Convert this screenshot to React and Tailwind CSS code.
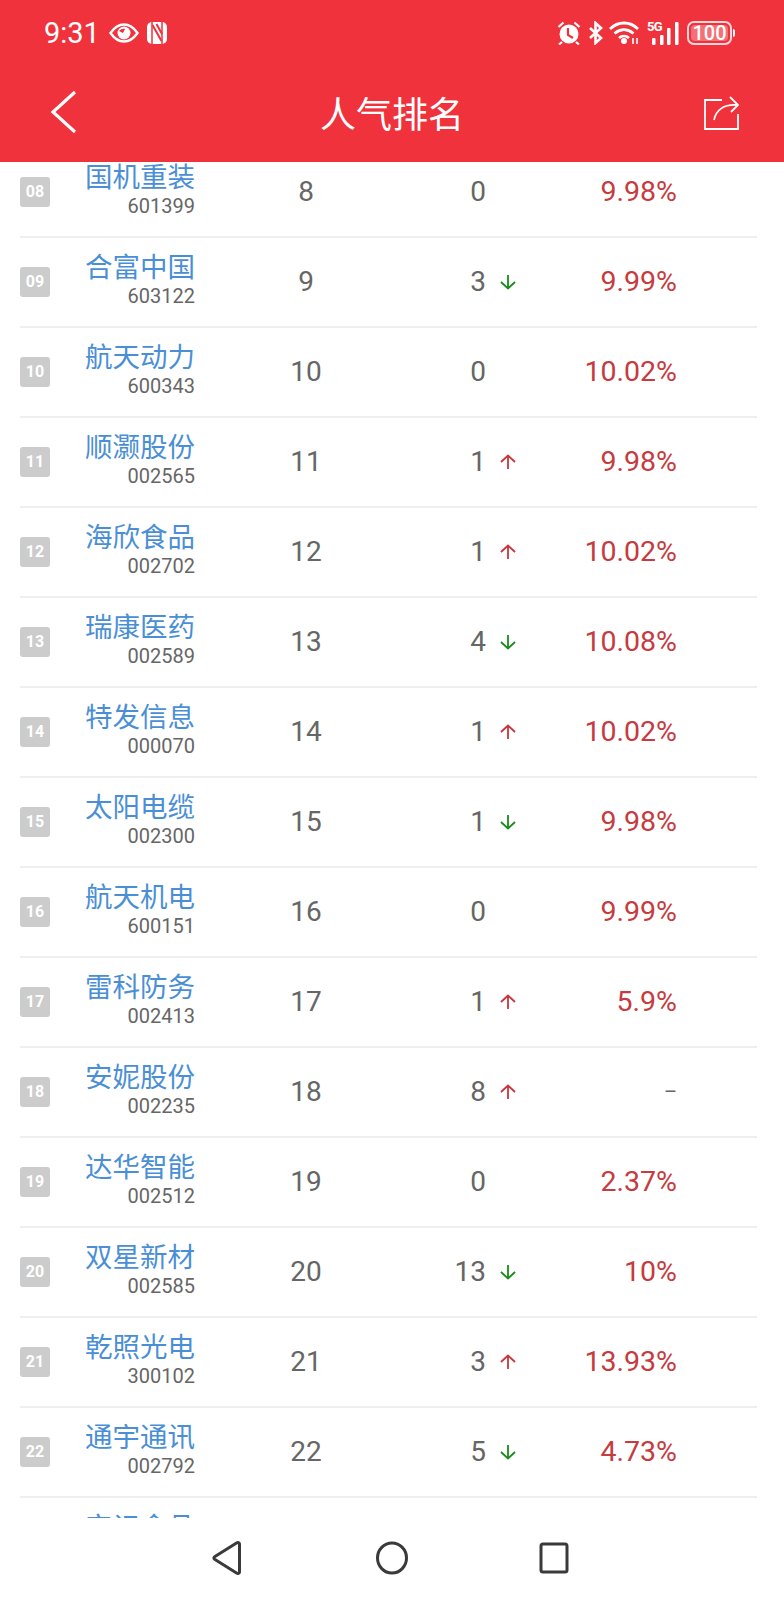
import React from "react";

const rows = [
  ["08", "国机重装", "601399", "8", "0", "", "9.98%"],
  ["09", "合富中国", "603122", "9", "3", "d", "9.99%"],
  ["10", "航天动力", "600343", "10", "0", "", "10.02%"],
  ["11", "顺灏股份", "002565", "11", "1", "u", "9.98%"],
  ["12", "海欣食品", "002702", "12", "1", "u", "10.02%"],
  ["13", "瑞康医药", "002589", "13", "4", "d", "10.08%"],
  ["14", "特发信息", "000070", "14", "1", "u", "10.02%"],
  ["15", "太阳电缆", "002300", "15", "1", "d", "9.98%"],
  ["16", "航天机电", "600151", "16", "0", "", "9.99%"],
  ["17", "雷科防务", "002413", "17", "1", "u", "5.9%"],
  ["18", "安妮股份", "002235", "18", "8", "u", "–"],
  ["19", "达华智能", "002512", "19", "0", "", "2.37%"],
  ["20", "双星新材", "002585", "20", "13", "d", "10%"],
  ["21", "乾照光电", "300102", "21", "3", "u", "13.93%"],
  ["22", "通宇通讯", "002792", "22", "5", "d", "4.73%"],
  ["23", "安记食品", "603696", "23", "0", "", ""],
];

function Arrow({ dir }) {
  if (!dir) return <span className="w-4 h-4" />;
  const up = dir === "u";
  return (
    <svg width="16" height="16" viewBox="0 0 16 16" fill="none" stroke={up ? "#c8363c" : "#1a8a1a"} strokeWidth="1.8">
      {up ? <path d="M8 15V1.5M1 8l7-6.5L15 8" /> : <path d="M8 1v13.5M1 8l7 6.5L15 8" />}
    </svg>
  );
}

function Row({ r }) {
  const dash = r[6] === "–";
  return (
    <div className="h-[90px] border-b-2 border-[#efefef] flex items-center">
      <div className="w-[30px] h-[30px] rounded-[3px] bg-[#cccccc] flex items-center justify-center text-white text-[16px] font-bold">{r[0]}</div>
      <div className="w-[145px] flex flex-col items-end mb-[6px]">
        <div className="text-[27.5px] leading-[34px] text-[#4a8fd6] translate-y-[1px]">{r[1]}</div>
        <div className="text-[20px] leading-[24px] text-[#666666]">{r[2]}</div>
      </div>
      <div className="w-[222px] text-center text-[28px] text-[#666666]">{r[3]}</div>
      <div className="w-[69px] text-right text-[28px] text-[#666666]">{r[4]}</div>
      <div className="w-[30px] flex justify-end"><Arrow dir={r[5]} /></div>
      <div className={dash ? "w-[161px] text-right text-[20px] text-[#666666]" : "w-[161px] text-right text-[28.5px] text-[#c63a40]"}>{r[6]}</div>
    </div>
  );
}

export default function App() {
  return (
    <div className="w-[784px] h-[1600px] bg-white flex flex-col overflow-hidden" style={{ fontFamily: "Roboto, 'Noto Sans CJK SC', sans-serif" }}>
      <header className="h-[162px] bg-[#ef323c] text-white flex flex-col relative z-10 shrink-0">
        <div className="h-[66px] flex items-center justify-between pl-[44px] pr-[49px]">
          <div className="flex items-center">
            <span className="text-[29px] leading-none mt-[1px]">9:31</span>
            <svg className="ml-[9px]" width="30" height="20" viewBox="0 0 30 20">
              <path d="M1.5 10C6 3.5 10 1.5 15 1.5s9 2 13.5 8.5C24 16.5 20 18.5 15 18.5S6 16.5 1.5 10z" fill="none" stroke="#fff" strokeWidth="2.4" />
              <circle cx="15" cy="10" r="6.5" fill="#fff" />
              <path d="M10 8c2-2 4-2.5 6-2l-2 4z" fill="#ef323c" />
            </svg>
            <svg className="ml-[7px]" width="22" height="24" viewBox="0 0 22 24">
              <rect x="1" y="1" width="20" height="22" rx="5" fill="#fff" />
              <path d="M6 1v22M16 1v22" stroke="#ef323c" strokeWidth="1.5" />
              <path d="M6.5 4l9 16M10.5 3l5.5 10" stroke="#ef323c" strokeWidth="2" fill="none" />
            </svg>
          </div>
          <div className="flex items-center">
            <svg width="24" height="24" viewBox="0 0 24 24">
              <circle cx="12" cy="13" r="9.5" fill="#fff" />
              <path d="M11 7v7l5 3" stroke="#ef323c" strokeWidth="2.2" fill="none" />
              <path d="M1.5 6l5-4.5M22.5 6l-5-4.5M5 21l-3 2.5M19 21l3 2.5" stroke="#fff" strokeWidth="2.2" />
            </svg>
            <svg className="ml-[7px]" width="15" height="24" viewBox="0 0 15 24" fill="none" stroke="#fff" strokeWidth="2.6">
              <path d="M2 7l11 10-5.5 5V2L13 7 2 17" />
            </svg>
            <svg className="ml-[6px]" width="31" height="24" viewBox="0 0 31 24" fill="none" stroke="#fff" strokeWidth="2.8">
              <path d="M1 8c8-8 20-8 28 0M5.5 12.5c6-5 13-5 19 0M10 17c3-2.5 7-2.5 10 0" />
              <circle cx="15" cy="20" r="3" fill="#fff" stroke="none" />
              <path d="M24 17v6M28 17v6" strokeWidth="1.6" />
            </svg>
            <div className="ml-[7px] relative w-[34px] h-[24px]">
              <span className="absolute left-0 top-[-1px] text-[13px] font-bold leading-[13px] tracking-tighter">5G</span>
              <svg className="absolute inset-0" width="34" height="24" viewBox="0 0 34 24" fill="#fff">
                <rect x="5" y="17" width="3.5" height="7" rx="1" />
                <rect x="13" y="14" width="3.5" height="10" rx="1" />
                <rect x="20" y="7" width="3.5" height="17" rx="1" />
                <rect x="28" y="1" width="3.5" height="23" rx="1" />
              </svg>
            </div>
            <div className="ml-[6px] w-[45px] h-[24px] rounded-[7px] border-2 border-white/80 p-[2px] flex">
              <div className="w-full h-full rounded-[4px] bg-white/30 flex items-center justify-center text-[20px] font-medium leading-none">100</div>
            </div>
            <div className="ml-[1px] w-[2px] h-[8px] bg-white rounded-r" />
          </div>
        </div>
        <div className="flex-1 relative flex items-center justify-center">
          <div className="text-[36px] leading-none mt-[3px]">人气排名</div>
          <svg className="absolute left-[50px] top-[24px]" width="28" height="44" viewBox="0 0 28 44" fill="none" stroke="#fff" strokeWidth="3.2">
            <path d="M25 2L3 22l22 20" />
          </svg>
          <svg className="absolute left-[702px] top-[30px]" width="38" height="36" viewBox="0 0 38 36" fill="none" stroke="#fff" strokeWidth="1.8">
            <path d="M20 4H3v29h33V18" />
            <path d="M12 24C14 14 22 8 35 9M28 1l8 8-7 7" />
          </svg>
        </div>
      </header>
      <div className="h-[1356px] overflow-hidden shrink-0 pl-[20px] pr-[27px]">
        <div className="-mt-[14px]">
          {rows.map((r) => <Row key={r[0]} r={r} />)}
        </div>
      </div>
      <nav className="flex-1 flex items-center justify-center">
        <svg width="360" height="36" viewBox="0 0 360 36" fill="none" stroke="#3a3a3a" strokeWidth="3" className="mt-[-3px]">
          <path d="M27.5 4v28c0 1.5-1.5 2-3 1L3 19.5c-1.5-1-1.5-2 0-3L24.5 3c1.5-1 3-.5 3 1z" />
          <ellipse cx="180" cy="18" rx="14.5" ry="15" />
          <rect x="329" y="4" width="26" height="28" rx="2" />
        </svg>
      </nav>
    </div>
  );
}
